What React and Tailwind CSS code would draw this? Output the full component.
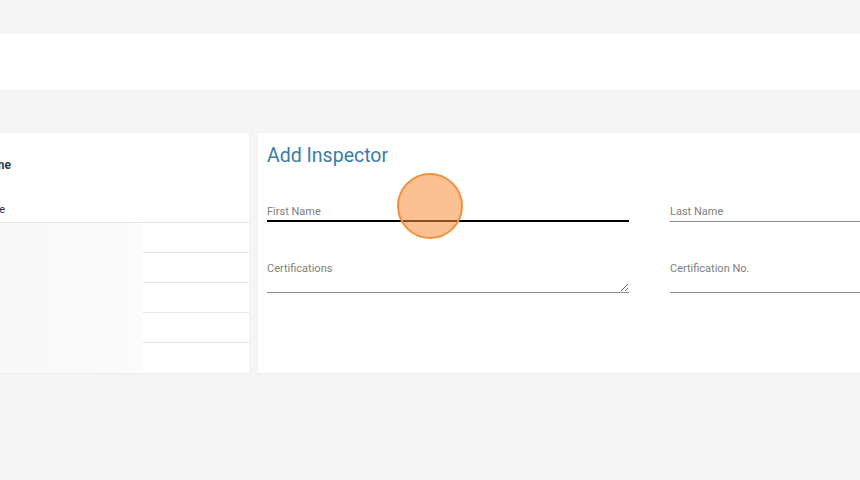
export default function App() {
  return (
    <div className="relative h-[480px] w-[860px] overflow-hidden bg-[#f5f5f5] font-['Roboto',sans-serif]">
      <div className="h-[34px]" />
      <div className="h-[56px] bg-white shadow-[0_1px_2px_rgba(0,0,0,0.02)]" />

      <div className="flex gap-[9px] pt-[43px]">
        {/* inspectors list, scrolled partly out of view */}
        <div className="-ml-[151px] flex h-[240px] w-[400px] shrink-0 flex-col bg-white shadow-[0_1px_2px_rgba(0,0,0,0.04)]">
          <div className="flex h-[40px] items-end">
            <div className="w-[162px] text-right text-[12px] font-bold leading-[16px] text-[#2f3d4c]">
              Inspector Name
            </div>
          </div>
          <div className="flex h-[50px] items-end border-b border-[#e6e6e6] pb-[5px]">
            <div className="w-[156px] text-right text-[11px] leading-[14px] text-[#333]">Name</div>
          </div>
          <div className="flex flex-1">
            <div className="w-[294px] bg-gradient-to-r from-[#f5f5f5] via-[#f8f8f8] to-[#fbfbfb]" />
            <div className="flex flex-1 flex-col">
              <div className="h-[30px] border-b border-[#e6e6e6]" />
              <div className="h-[30px] border-b border-[#e6e6e6]" />
              <div className="h-[30px] border-b border-[#e6e6e6]" />
              <div className="h-[30px] border-b border-[#e6e6e6]" />
              <div className="flex-1" />
            </div>
          </div>
        </div>

        {/* add inspector form */}
        <div className="h-[240px] w-[800px] shrink-0 bg-white pl-[9px] pt-[11px] shadow-[0_1px_2px_rgba(0,0,0,0.04)]">
          <h2 className="text-[19.5px] leading-[24px] text-[#3a7ca8]">Add Inspector</h2>

          <div className="mt-[32px] grid grid-cols-[362px_362px] gap-x-[41px] gap-y-[35px]">
            <div className="border-b-2 border-black pb-[1px] pt-[5px]">
              <div className="text-[11px] leading-[14px] text-[#808080]">First Name</div>
            </div>
            <div className="border-b border-[#8c8c8c] pb-[2px] pt-[5px]">
              <div className="text-[11px] leading-[14px] text-[#808080]">Last Name</div>
            </div>

            <div className="flex flex-col border-b border-[#8c8c8c] pt-[5px]">
              <div className="text-[11px] leading-[14px] text-[#808080]">Certifications</div>
              <textarea className="block h-[16px] w-full resize-y bg-transparent text-[11px] outline-none" />
            </div>
            <div className="flex flex-col border-b border-[#8c8c8c] pt-[5px]">
              <div className="text-[11px] leading-[14px] text-[#808080]">Certification No.</div>
              <div className="h-[16px]" />
            </div>
          </div>
        </div>
      </div>

      {/* click highlight */}
      <div className="absolute left-[397px] top-[173px] h-[66px] w-[66px] rounded-full border-2 border-[#f0913e] bg-[#fa8c38]/55" />
    </div>
  );
}
